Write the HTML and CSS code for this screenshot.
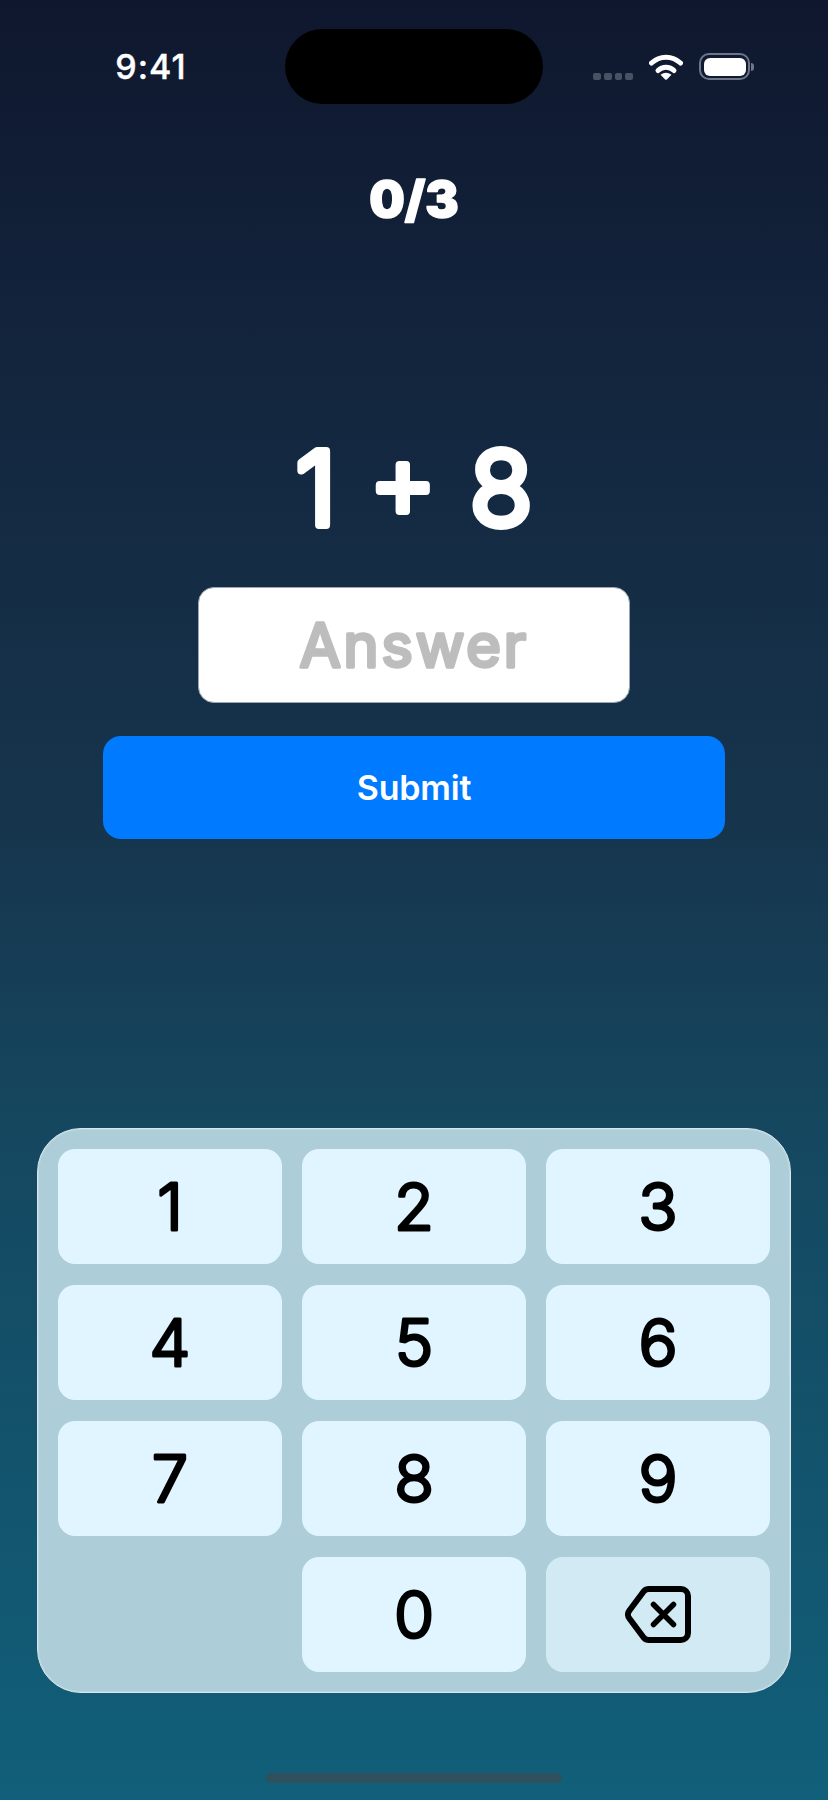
FILE: index.html
```html
<!DOCTYPE html>
<html lang="en">
<head>
<meta charset="utf-8">
<title>Math quiz</title>
<link rel="stylesheet" href="styles.css">
</head>
<body>
<main class="screen">
  <header class="status">
    <div class="status-time">9:41</div>
    <div class="island"></div>
    <div class="status-icons">
      <div class="signal"><i></i><i></i><i></i><i></i></div>
      <svg class="wifi" viewBox="0 0 34 26" aria-hidden="true">
        <path d="M2.5 9A21 21 0 0 1 31.500 9" fill="none" stroke="#fff" stroke-width="5" stroke-linecap="round"/>
        <path d="M9 16.500A11.500 11.500 0 0 1 25 16.500" fill="none" stroke="#fff" stroke-width="5" stroke-linecap="round"/>
        <path d="M11.500 20.800Q17 16.500 22.500 20.800L17.800 25.500Q17 26 16.200 25.500Z" fill="#fff"/>
      </svg>
      <div class="battery"><div class="battery-body"><div class="battery-fill"></div></div><div class="battery-nub"></div></div>
    </div>
  </header>
  <svg class="counter" viewBox="0 0 200 60"><text x="100" y="48">0/3</text></svg>
  <svg class="equation" viewBox="0 0 400 140"><text x="200" y="107">1 + 8</text></svg>
  <div class="answer">
    <svg class="answer-text" viewBox="0 0 430 114"><text x="215" y="79">Answer</text></svg>
  </div>
  <button class="submit" type="button">Submit</button>
  <section class="pad">
    <button class="key" type="button"><svg class="digit" viewBox="0 0 224 115"><text x="112" y="81">1</text></svg></button>
    <button class="key" type="button"><svg class="digit" viewBox="0 0 224 115"><text x="112" y="81">2</text></svg></button>
    <button class="key" type="button"><svg class="digit" viewBox="0 0 224 115"><text x="112" y="81">3</text></svg></button>
    <button class="key" type="button"><svg class="digit" viewBox="0 0 224 115"><text x="112" y="81">4</text></svg></button>
    <button class="key" type="button"><svg class="digit" viewBox="0 0 224 115"><text x="112" y="81">5</text></svg></button>
    <button class="key" type="button"><svg class="digit" viewBox="0 0 224 115"><text x="112" y="81">6</text></svg></button>
    <button class="key" type="button"><svg class="digit" viewBox="0 0 224 115"><text x="112" y="81">7</text></svg></button>
    <button class="key" type="button"><svg class="digit" viewBox="0 0 224 115"><text x="112" y="81">8</text></svg></button>
    <button class="key" type="button"><svg class="digit" viewBox="0 0 224 115"><text x="112" y="81">9</text></svg></button>
    <div class="key-blank"></div>
    <button class="key" type="button"><svg class="digit" viewBox="0 0 224 115"><text x="112" y="81">0</text></svg></button>
    <button class="key key-delete" type="button" aria-label="Delete">
      <svg class="delete-icon" viewBox="0 0 66 57" aria-hidden="true">
        <path d="M24 3H56a7 7 0 0 1 7 7V47a7 7 0 0 1-7 7H24a7 7 0 0 1-5.200-2.300L4.600 32.800a6.500 6.500 0 0 1 0-8.600L18.800 5.300A7 7 0 0 1 24 3Z" fill="none" stroke="#000" stroke-width="6" stroke-linejoin="round"/>
        <path d="M28.500 18.500L48.500 38.500M48.500 18.500L28.500 38.500" fill="none" stroke="#000" stroke-width="5.500" stroke-linecap="round"/>
      </svg>
    </button>
  </section>
  <div class="home-bar"></div>
</main>
</body>
</html>
```

FILE: styles.css
```css
* { box-sizing: border-box; }

html, body { margin: 0; padding: 0; }

body {
  font-family: Inter, "Liberation Sans", sans-serif;
  background: #0f172e;
}

.screen {
  width: 828px;
  height: 1800px;
  overflow: hidden;
  display: flex;
  flex-direction: column;
  align-items: center;
  background: linear-gradient(180deg, #0f172e 0%, #13273f 23%, #16364e 47%, #15475f 62%, #115f7a 100%);
}

svg text {
  text-anchor: middle;
  stroke-linejoin: round;
  stroke-linecap: round;
}

.status {
  width: 100%;
  height: 75px;
  margin-top: 29px;
  flex: none;
  display: grid;
  grid-template-columns: 285px 258px 285px;
  align-items: center;
}

.status-time {
  color: #fff;
  font-size: 34px;
  font-weight: 500;
  letter-spacing: 1px;
  -webkit-text-stroke: 0.4px #fff;
  text-align: center;
  padding-left: 17px;
  line-height: 40px;
}

.island {
  height: 75px;
  border-radius: 37.5px;
  background: #000;
}

.status-icons {
  display: flex;
  align-items: flex-start;
  padding-left: 50px;
  height: 75px;
  padding-top: 24px;
}

.signal {
  display: flex;
  gap: 3px;
  margin-top: 20px;
}

.signal i {
  width: 7.750px;
  height: 7px;
  border-radius: 2px;
  background: #475264;
}

.wifi {
  width: 34px;
  height: 26px;
  margin-left: 16px;
  margin-top: 1px;
}

.battery {
  display: flex;
  align-items: center;
  margin-left: 16px;
}

.battery-body {
  width: 51px;
  height: 27px;
  border: 2.500px solid #6d7688;
  border-radius: 10px;
  padding: 2.500px;
}

.battery-fill {
  width: 100%;
  height: 100%;
  border-radius: 6px;
  background: #fff;
}

.battery-nub {
  width: 3px;
  height: 8px;
  margin-left: 1px;
  border-radius: 0 3px 3px 0;
  background: #6d7688;
}

.counter {
  display: block;
  flex: none;
  margin-top: 65px;
  width: 200px;
  height: 60px;
}

.counter text {
  fill: #fff;
  stroke: #fff;
  stroke-width: 1.500px;
  font-size: 50px;
  font-weight: 900;
}

.equation {
  display: block;
  flex: none;
  margin-top: 189px;
  width: 400px;
  height: 140px;
}

.equation text {
  fill: #fff;
  stroke: #fff;
  stroke-width: 8px;
  font-size: 102px;
  font-weight: 300;
  word-spacing: 5px;
}

.answer {
  margin-top: 29px;
  width: 432px;
  height: 116px;
  flex: none;
  background: #fff;
  border: 1px solid #9aa6b0;
  border-radius: 16px;
}

.answer-text {
  display: block;
  width: 430px;
  height: 114px;
}

.answer-text text {
  fill: #bdbdbd;
  stroke: #bdbdbd;
  stroke-width: 3.500px;
  font-size: 60px;
  font-weight: 400;
  letter-spacing: 2.500px;
}

.submit {
  margin-top: 33px;
  width: 622px;
  height: 103px;
  flex: none;
  border: 0;
  border-radius: 18px;
  background: #007aff;
  color: #fff;
  font-family: inherit;
  font-size: 34px;
  font-weight: 600;
  letter-spacing: -0.2px;
}

.pad {
  margin-top: 289px;
  width: 754px;
  height: 565px;
  flex: none;
  padding: 20px;
  display: grid;
  grid-template-columns: repeat(3, 224px);
  grid-auto-rows: 115px;
  gap: 21px 20px;
  background: #adcdd9;
  border: 1px solid #d5e6ec;
  box-shadow: inset 0 0 0 1px #bcd5de;
  border-radius: 44px;
}

.key {
  border: 0;
  padding: 0;
  border-radius: 17px;
  background: #e0f5ff;
  font-family: inherit;
  display: flex;
  align-items: center;
  justify-content: center;
}

.digit {
  display: block;
  width: 224px;
  height: 115px;
}

.digit text {
  fill: #000;
  stroke: #000;
  stroke-width: 3px;
  font-size: 65px;
  font-weight: 300;
}

.key-delete { background: #d2eaf4; }

.delete-icon {
  width: 66px;
  height: 57px;
}

.home-bar {
  margin-top: 80px;
  width: 296px;
  height: 10px;
  flex: none;
  border-radius: 5px;
  background: #2f505c;
}
```
